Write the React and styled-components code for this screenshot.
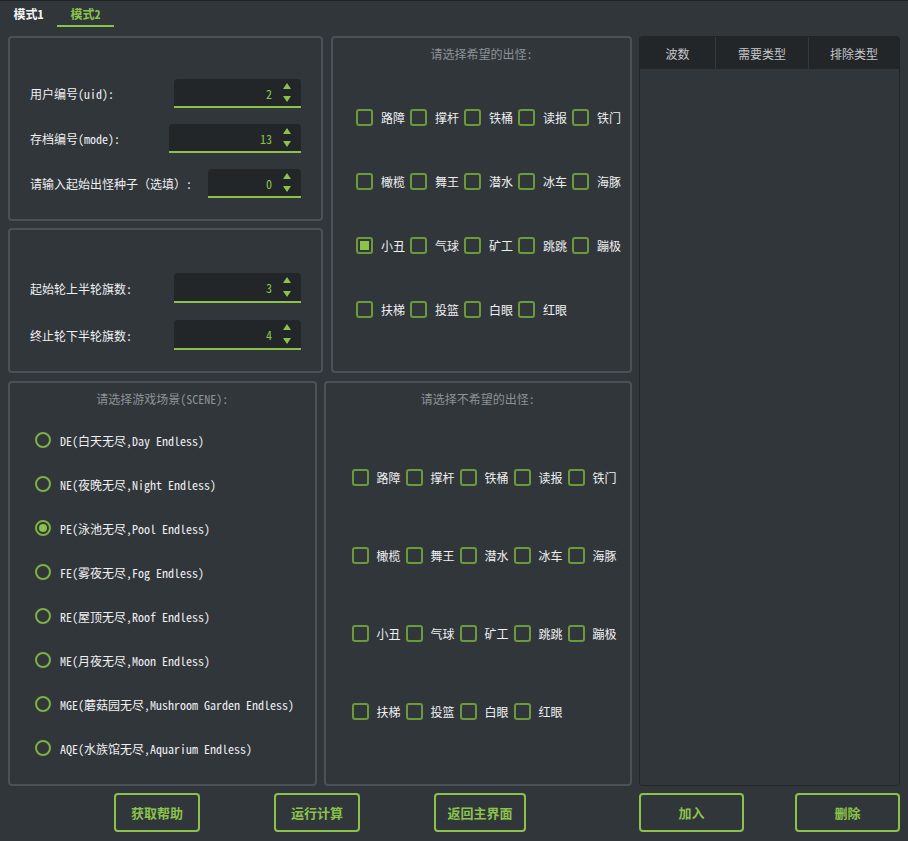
import React, { useState } from "react";
import styled, { createGlobalStyle } from "styled-components";

const GlobalStyle = createGlobalStyle`
  body {
    margin: 0;
    background: #31363b;
  }
  * {
    box-sizing: border-box;
  }
`;

const GREEN = "#8bc34a";
const FONT = `"Noto Sans Mono CJK SC", "Noto Sans CJK SC", monospace`;

const Page = styled.div`
  width: 908px;
  height: 841px;
  background: #31363b;
  border-top: 1px solid #1f2225;
  font-family: ${FONT};
  font-size: 12px;
  color: #eff0f1;
  overflow: hidden;
`;

const TabBar = styled.div`
  display: flex;
  height: 26px;
`;

const Tab = styled.div`
  width: 57px;
  display: flex;
  align-items: center;
  justify-content: center;
  font-weight: bold;
  font-size: 12px;
  color: ${({ $active }) => ($active ? GREEN : "#f4f4f4")};
  border-bottom: 2px solid ${({ $active }) => ($active ? GREEN : "transparent")};
  cursor: pointer;
`;

const Body = styled.div`
  display: grid;
  grid-template-columns: 624px 261px;
  grid-template-rows: 750px 39px;
  column-gap: 7px;
  row-gap: 7px;
  padding: 9px 8px 0;
`;

const LeftArea = styled.div`
  display: flex;
  flex-direction: column;
  gap: 8px;
`;

const Row = styled.div`
  display: flex;
  height: ${({ $h }) => $h}px;
  gap: ${({ $gap }) => $gap}px;
`;

const Stack = styled.div`
  display: flex;
  flex-direction: column;
  gap: 7px;
  width: ${({ $w }) => $w}px;
`;

const Panel = styled.div`
  width: ${({ $w }) => ($w ? `${$w}px` : "auto")};
  height: ${({ $h }) => ($h ? `${$h}px` : "auto")};
  flex: ${({ $h }) => ($h ? "none" : "1")};
  border: 2px solid #4a5158;
  border-radius: 4px;
  padding: ${({ $pad }) => $pad};
  display: flex;
  flex-direction: column;
`;

const Title = styled.div`
  text-align: center;
  color: #8d9297;
  line-height: 16px;
  height: 16px;
  margin-bottom: ${({ $mb }) => $mb}px;
`;

const FormRows = styled.div`
  display: flex;
  flex-direction: column;
  gap: ${({ $gap }) => $gap}px;
`;

const FormRow = styled.div`
  display: flex;
  align-items: center;
  justify-content: space-between;
`;

const Spin = styled.div`
  width: ${({ $w }) => $w}px;
  height: ${({ $h }) => $h}px;
  background: #232629;
  border-radius: 4px 4px 0 0;
  border-bottom: 2px solid ${GREEN};
  display: flex;
`;

const SpinValue = styled.div`
  flex: 1;
  display: flex;
  align-items: center;
  justify-content: flex-end;
  color: ${GREEN};
  padding-top: 1px;
`;

const SpinArrows = styled.div`
  width: 29px;
  display: flex;
  flex-direction: column;
  align-items: center;
  justify-content: space-between;
  padding: 4px 0 4px;
`;

const Arrow = styled.span`
  width: 0;
  height: 0;
  border-left: 4px solid transparent;
  border-right: 4px solid transparent;
  ${({ $down }) =>
    $down
      ? `border-top: 6px solid ${GREEN};`
      : `border-bottom: 6px solid ${GREEN};`}
`;

const CheckRows = styled.div`
  display: flex;
  flex-direction: column;
  gap: ${({ $gap }) => $gap}px;
  padding-left: ${({ $pl }) => $pl}px;
`;

const CheckRow = styled.div`
  display: flex;
  height: 17px;
`;

const CheckItem = styled.label`
  width: 54px;
  display: flex;
  align-items: center;
  gap: 8px;
  cursor: pointer;
  white-space: nowrap;
`;

const Box = styled.span`
  width: 17px;
  height: 17px;
  flex: none;
  border: 2px solid #6a9a3a;
  border-radius: 3px;
  display: flex;
  align-items: center;
  justify-content: center;
  &::after {
    content: "";
    width: 9px;
    height: 9px;
    background: ${({ $on }) => ($on ? GREEN : "transparent")};
  }
`;

const RadioList = styled.div`
  display: flex;
  flex-direction: column;
  gap: 28px;
  padding-left: 25px;
`;

const RadioItem = styled.label`
  display: flex;
  align-items: center;
  height: 16px;
  gap: 9px;
  cursor: pointer;
  white-space: nowrap;
`;

const Circle = styled.span`
  width: 16px;
  height: 16px;
  flex: none;
  border: 2px solid #7fb043;
  border-radius: 50%;
  display: flex;
  align-items: center;
  justify-content: center;
  &::after {
    content: "";
    width: 8px;
    height: 8px;
    border-radius: 50%;
    background: ${({ $on }) => ($on ? GREEN : "transparent")};
  }
`;

const Table = styled.div`
  border: 1px solid #232629;
  border-radius: 3px;
  overflow: hidden;
`;

const HeaderRow = styled.div`
  display: grid;
  grid-template-columns: 75px 93px 1fr;
  height: 32px;
  background: #232629;
`;

const HeaderCell = styled.div`
  display: flex;
  align-items: center;
  justify-content: center;
  color: #c3c7cb;
  font-family: "Noto Sans CJK SC", sans-serif;
  font-size: 12px;
  border-left: ${({ $first }) => ($first ? "none" : "1px solid #33383d")};
`;

const ButtonBar = styled.div`
  display: flex;
  align-items: stretch;
  gap: ${({ $gap }) => $gap}px;
  padding-left: ${({ $pl }) => $pl}px;
  justify-content: ${({ $between }) => ($between ? "space-between" : "flex-start")};
`;

const Btn = styled.button`
  width: ${({ $w }) => $w}px;
  background: transparent;
  border: 2px solid ${GREEN};
  border-radius: 4px;
  color: ${GREEN};
  font-family: ${FONT};
  font-weight: bold;
  font-size: 13px;
  cursor: pointer;
`;

const MONSTERS = [
  ["路障", "撑杆", "铁桶", "读报", "铁门"],
  ["橄榄", "舞王", "潜水", "冰车", "海豚"],
  ["小丑", "气球", "矿工", "跳跳", "蹦极"],
  ["扶梯", "投篮", "白眼", "红眼"],
];

const SCENES = [
  "DE(白天无尽,Day Endless)",
  "NE(夜晚无尽,Night Endless)",
  "PE(泳池无尽,Pool Endless)",
  "FE(雾夜无尽,Fog Endless)",
  "RE(屋顶无尽,Roof Endless)",
  "ME(月夜无尽,Moon Endless)",
  "MGE(蘑菇园无尽,Mushroom Garden Endless)",
  "AQE(水族馆无尽,Aquarium Endless)",
];

const SpinBox = ({ value, w, h }) => (
  <Spin $w={w} $h={h}>
    <SpinValue>{value}</SpinValue>
    <SpinArrows>
      <Arrow />
      <Arrow $down />
    </SpinArrows>
  </Spin>
);

const CheckGrid = ({ checked, onToggle, gap, pl }) => (
  <CheckRows $gap={gap} $pl={pl}>
    {MONSTERS.map((row, i) => (
      <CheckRow key={i}>
        {row.map((name) => (
          <CheckItem key={name} onClick={() => onToggle(name)}>
            <Box $on={checked.includes(name)} />
            {name}
          </CheckItem>
        ))}
      </CheckRow>
    ))}
  </CheckRows>
);

const App = () => {
  const [tab, setTab] = useState(1);
  const [scene, setScene] = useState(2);
  const [wanted, setWanted] = useState(["小丑"]);
  const [unwanted, setUnwanted] = useState([]);

  const toggle = (list, setList) => (name) =>
    setList(list.includes(name) ? list.filter((n) => n !== name) : [...list, name]);

  return (
    <Page>
      <GlobalStyle />
      <TabBar>
        <Tab $active={tab === 0} onClick={() => setTab(0)}>模式1</Tab>
        <Tab $active={tab === 1} onClick={() => setTab(1)}>模式2</Tab>
      </TabBar>
      <Body>
        <LeftArea>
          <Row $h={337} $gap={8}>
            <Stack $w={315}>
              <Panel $h={185} $pad="41px 20px 0">
                <FormRows $gap={16}>
                  <FormRow>
                    用户编号(uid):
                    <SpinBox value="2" w={127} h={29} />
                  </FormRow>
                  <FormRow>
                    存档编号(mode):
                    <SpinBox value="13" w={132} h={29} />
                  </FormRow>
                  <FormRow>
                    请输入起始出怪种子（选填）:
                    <SpinBox value="0" w={93} h={29} />
                  </FormRow>
                </FormRows>
              </Panel>
              <Panel $pad="43px 20px 0">
                <FormRows $gap={17}>
                  <FormRow>
                    起始轮上半轮旗数:
                    <SpinBox value="3" w={127} h={30} />
                  </FormRow>
                  <FormRow>
                    终止轮下半轮旗数:
                    <SpinBox value="4" w={127} h={30} />
                  </FormRow>
                </FormRows>
              </Panel>
            </Stack>
            <Panel $pad="8px 0 0">
              <Title $mb={47}>请选择希望的出怪:</Title>
              <CheckGrid checked={wanted} onToggle={toggle(wanted, setWanted)} gap={47} pl={23} />
            </Panel>
          </Row>
          <Row $h={405} $gap={7}>
            <Panel $w={309} $pad="8px 0 0">
              <Title $mb={25}>请选择游戏场景(SCENE):</Title>
              <RadioList>
                {SCENES.map((s, i) => (
                  <RadioItem key={s} onClick={() => setScene(i)}>
                    <Circle $on={scene === i} />
                    {s}
                  </RadioItem>
                ))}
              </RadioList>
            </Panel>
            <Panel $pad="8px 0 0">
              <Title $mb={62}>请选择不希望的出怪:</Title>
              <CheckGrid checked={unwanted} onToggle={toggle(unwanted, setUnwanted)} gap={61} pl={26} />
            </Panel>
          </Row>
        </LeftArea>
        <Table>
          <HeaderRow>
            <HeaderCell $first>波数</HeaderCell>
            <HeaderCell>需要类型</HeaderCell>
            <HeaderCell>排除类型</HeaderCell>
          </HeaderRow>
        </Table>
        <ButtonBar $pl={106} $gap={74}>
          <Btn $w={86}>获取帮助</Btn>
          <Btn $w={86}>运行计算</Btn>
          <Btn $w={92}>返回主界面</Btn>
        </ButtonBar>
        <ButtonBar $between>
          <Btn $w={105}>加入</Btn>
          <Btn $w={105}>删除</Btn>
        </ButtonBar>
      </Body>
    </Page>
  );
};

export default App;
